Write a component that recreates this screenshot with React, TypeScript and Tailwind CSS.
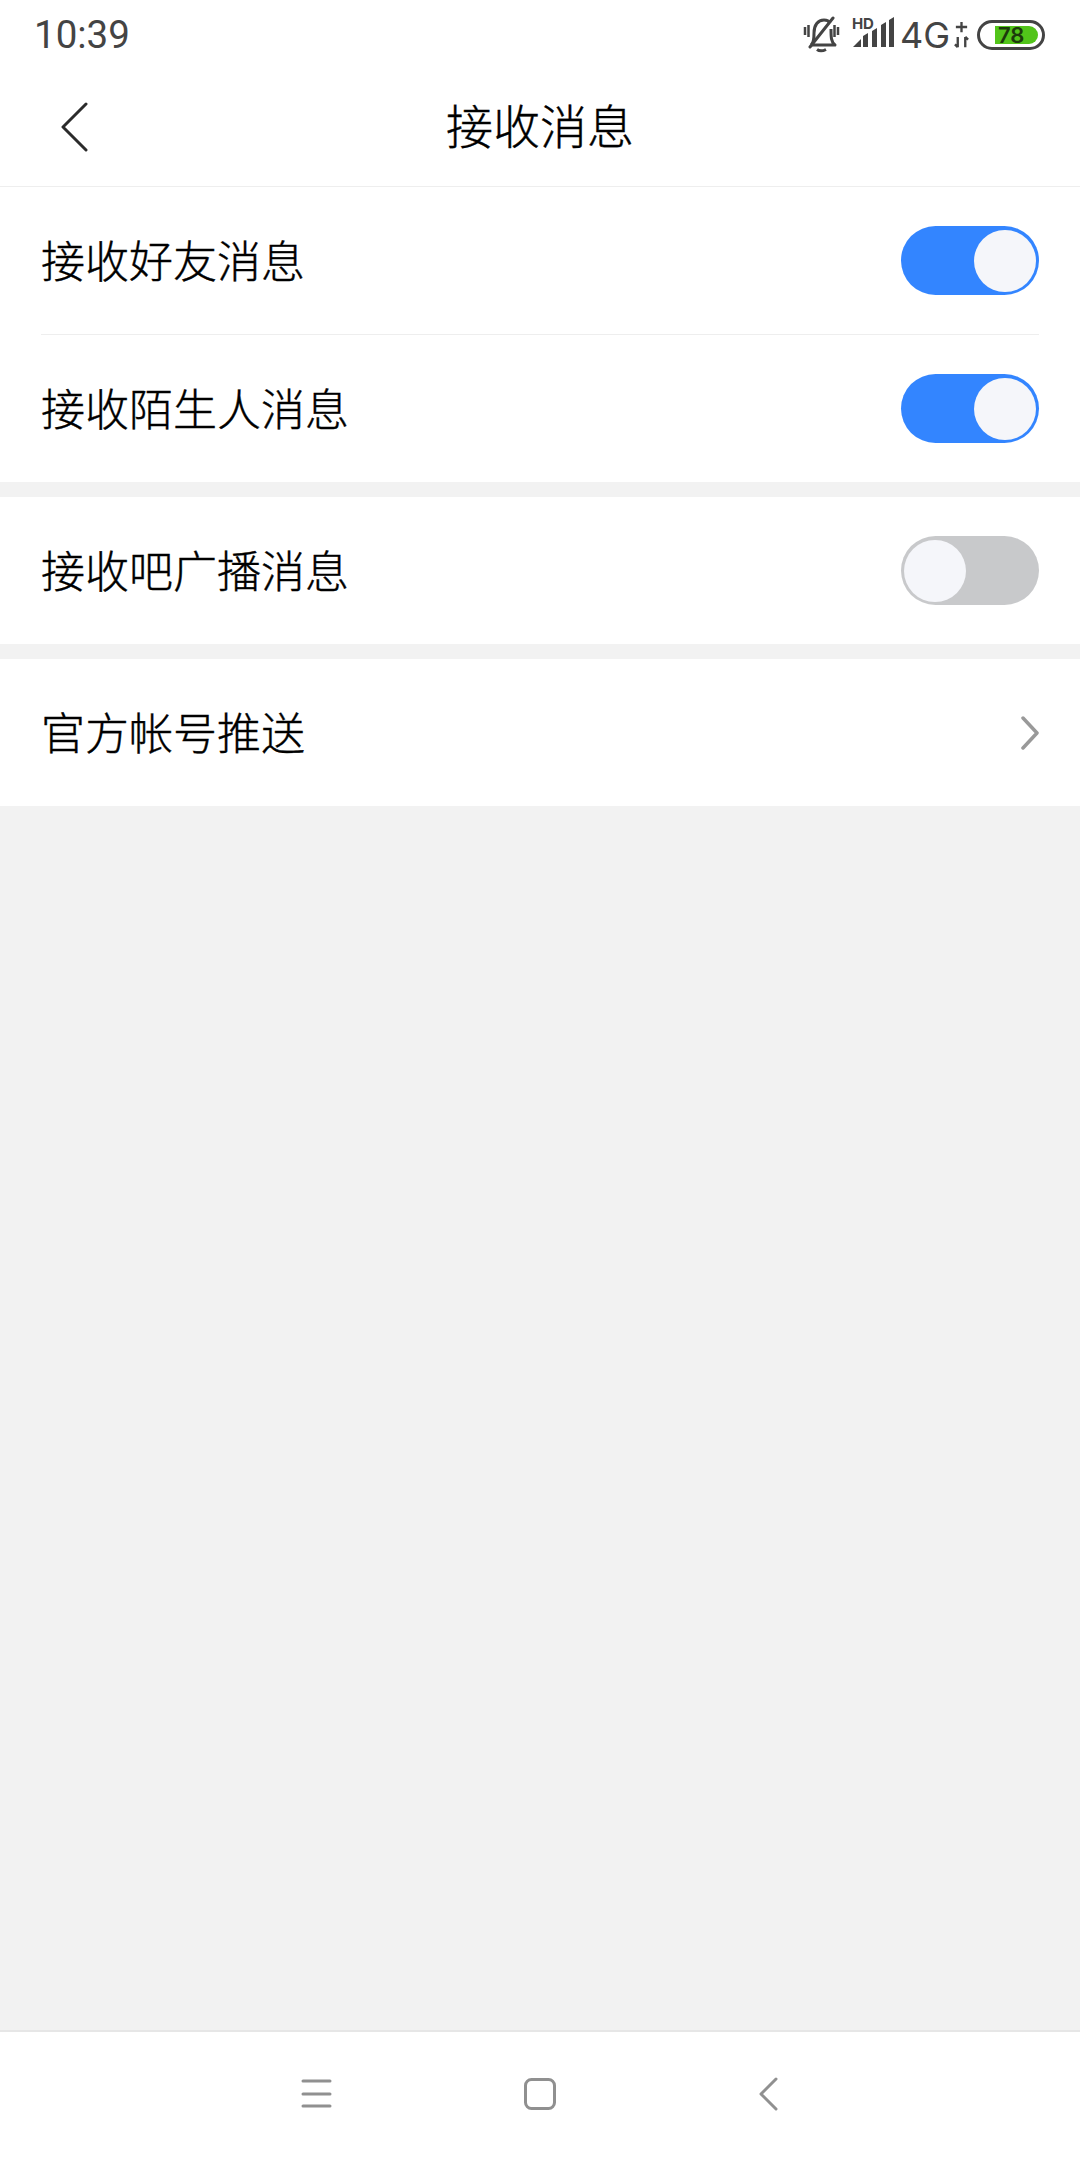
const CJK = "font-['Noto_Sans_CJK_SC','Noto_Sans',sans-serif]";

function Toggle({ on }: { on: boolean }) {
  return (
    <div className={`flex h-[69px] w-[138px] items-center rounded-full px-[3px] ${on ? "justify-end bg-[#3385ff]" : "justify-start bg-[#c8c9cb]"}`}>
      <div className="h-[62px] w-[62px] rounded-full bg-[#f5f6fa]" />
    </div>
  );
}

function Row({ label, children, divider }: { label: string; children: React.ReactNode; divider?: boolean }) {
  return (
    <div className="bg-white pl-[41px] pr-[41px]">
      <div className={`flex h-[147px] items-center justify-between ${divider ? "box-content border-b border-[#eeeeee]" : ""}`}>
        <span className="pb-[4px] text-[44px] font-light leading-none text-black [-webkit-text-stroke:0.4px_black]">{label}</span>
        {children}
      </div>
    </div>
  );
}

function StatusIcons() {
  return (
    <div className="flex items-center font-['Inter',sans-serif] text-[#444444]">
      <svg width="38" height="38" viewBox="0 0 38 38" fill="none" stroke="#444444" className="mr-[12px]">
        <path d="M9 29c3-2 3-6 3-12 0-8 4-13 10-13 3 0 5 1 6 3M29 13c0 8 0 13 4 16H9" strokeWidth="3" strokeLinejoin="round" />
        <path d="M8 31 31 2" strokeWidth="3" strokeLinecap="round" />
        <path d="M15 33.500c2 1.500 6 1.500 9 0" strokeWidth="3" />
        <path d="M3 11v8M6.500 9v12M32.500 9v12M36 11v8" strokeWidth="2.500" />
      </svg>
      <div className="relative mr-[5px] h-[36px] w-[43px]">
        <span className="absolute left-0 top-[-1px] text-[15px] font-bold leading-[15px]">HD</span>
        <svg width="43" height="36" viewBox="0 0 43 36" fill="#444444" className="absolute left-0 top-0">
          <path d="M1 30 9 22V30ZM11 19l5-3V30h-5ZM20 14l5-3V30h-5ZM29 8l5-3V30h-5ZM37 3l5-3V30h-5Z" />
        </svg>
      </div>
      <span className="text-[36px] leading-none">4G</span>
      <svg width="15" height="30" viewBox="0 0 16 30" fill="none" stroke="#444444" strokeWidth="2.500" className="ml-[4px] mr-[8px]">
        <path d="M8 1v11M2 6.500h12" />
        <path d="M4 17v11M1 25l3 3M12 17v11M12 17l3 3" />
      </svg>
      <div className="flex h-[30px] w-[68px] items-center rounded-full border-[3px] border-[#444444] pl-[15px] pr-[4px]">
        <div className="flex h-[18px] w-[43px] items-center justify-start rounded-l-[2px] rounded-r-full bg-[#52c41a] pl-[3px] text-[22px] font-semibold leading-none text-[#1c3a0c]">78</div>
      </div>
    </div>
  );
}

export default function App() {
  return (
    <div className={`flex h-[2160px] w-[1080px] flex-col bg-[#f2f2f2] ${CJK}`}>
      <div className="bg-white">
        <div className="flex h-[64px] items-center justify-between pl-[34px] pr-[35px] pt-[6px]">
          <span className="font-['Roboto',sans-serif] text-[38.500px] leading-none text-[#444444]">10:39</span>
          <StatusIcons />
        </div>
        <div className="relative flex h-[123px] items-center justify-center border-b border-[#eeeeee]">
          <svg width="30" height="50" viewBox="0 0 30 50" fill="none" stroke="#2b2b2b" strokeWidth="3" strokeLinecap="round" strokeLinejoin="round" className="absolute left-[60px] top-[38px]">
            <path d="M26 2 3 25l23 23" />
          </svg>
          <span className="pb-[3px] text-[47px] font-light leading-none text-black [-webkit-text-stroke:0.4px_black]">接收消息</span>
        </div>
      </div>

      <Row label="接收好友消息" divider>
        <Toggle on />
      </Row>
      <Row label="接收陌生人消息">
        <Toggle on />
      </Row>
      <div className="mt-[15px]">
        <Row label="接收吧广播消息">
          <Toggle on={false} />
        </Row>
      </div>
      <div className="mt-[15px]">
        <Row label="官方帐号推送">
          <svg width="18" height="34" viewBox="0 0 18 34" fill="none" stroke="#999999" strokeWidth="3.500" strokeLinecap="round" strokeLinejoin="round">
            <path d="M2 2l14 15L2 32" />
          </svg>
        </Row>
      </div>

      <div className="flex-1" />

      <div className="flex h-[130px] items-center border-t-2 border-[#e6e6e6] bg-white pb-[4px] pl-[300px]">
        <svg width="32" height="30" viewBox="0 0 32 30" fill="none" stroke="#909090" strokeWidth="3" strokeLinecap="round" className="mr-[192px]">
          <path d="M3 2h27M3 15h27M3 27h27" />
        </svg>
        <svg width="32" height="32" viewBox="0 0 32 32" fill="none" stroke="#909090" strokeWidth="3" className="mr-[202px]">
          <rect x="1.500" y="1.500" width="29" height="29" rx="6" />
        </svg>
        <svg width="20" height="34" viewBox="0 0 20 34" fill="none" stroke="#909090" strokeWidth="3" strokeLinecap="round" strokeLinejoin="round">
          <path d="M18 2 3 17l15 15" />
        </svg>
      </div>
    </div>
  );
}
